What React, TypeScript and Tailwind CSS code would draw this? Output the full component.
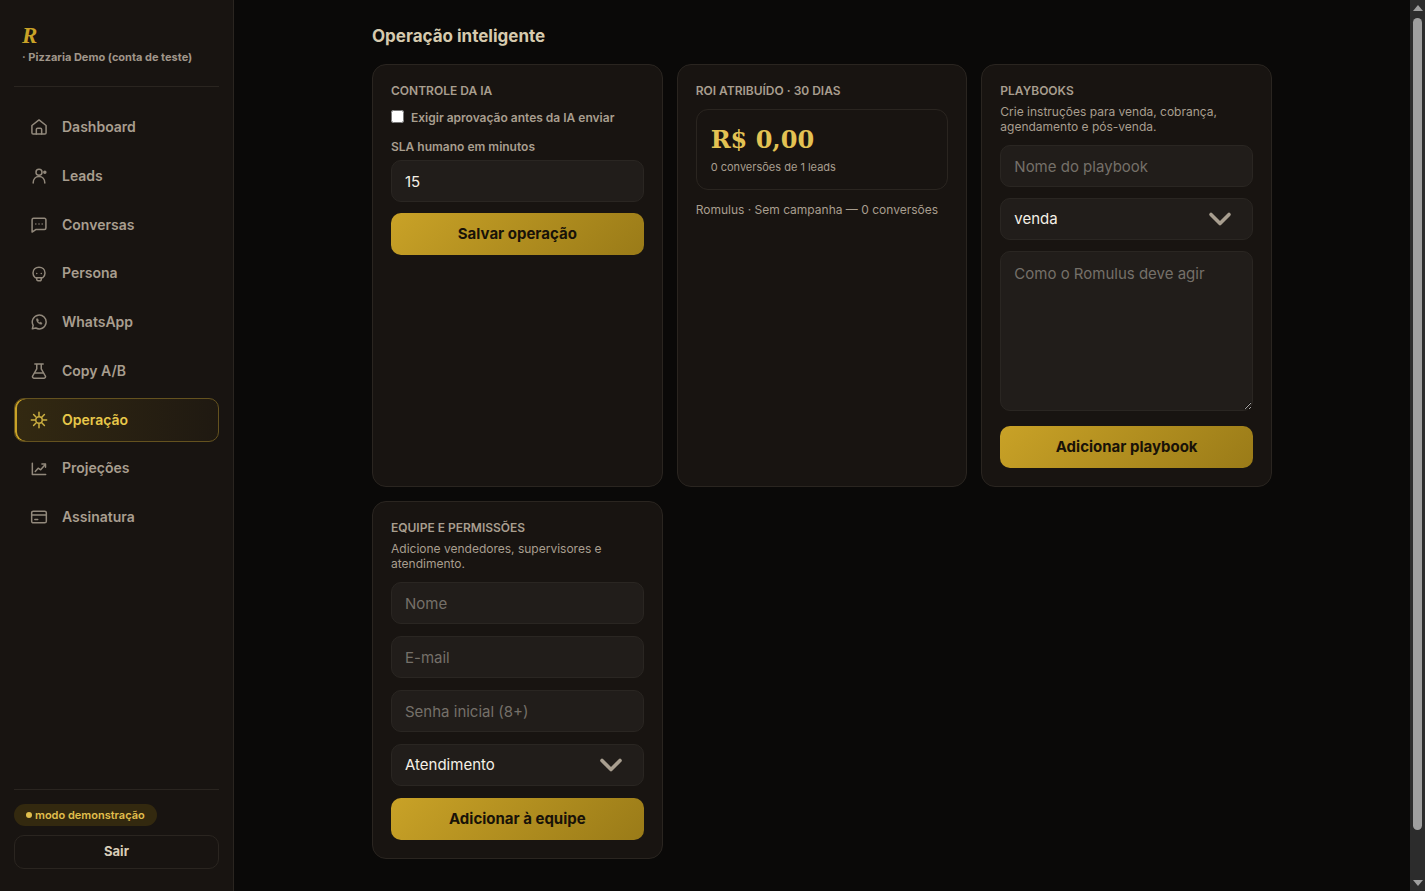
import type { ReactNode } from "react";
import { ChevronDown } from "lucide-react";

const navItems: { label: string; icon: ReactNode }[] = [
  {
    label: "Dashboard",
    icon: (
      <>
        <path d="M3.500 10.200 12 3.500l8.500 6.700V19a1.500 1.500 0 0 1-1.500 1.500H5A1.500 1.500 0 0 1 3.500 19z" />
        <path d="M8.800 20.500v-5.500a1.500 1.500 0 0 1 1.500-1.500h3.400a1.500 1.500 0 0 1 1.500 1.500v5.500" />
      </>
    ),
  },
  {
    label: "Leads",
    icon: (
      <>
        <circle cx="12" cy="7.500" r="3.600" />
        <path d="M5 20.500c0-5 3-8 7-8s7 3 7 8" />
        <circle cx="19" cy="7.500" r="1.200" fill="currentColor" />
      </>
    ),
  },
  {
    label: "Conversas",
    icon: (
      <>
        <path d="M5.500 4h13A1.800 1.800 0 0 1 20.300 5.800v9.700a1.800 1.800 0 0 1-1.800 1.800H8.500L3.700 20.500V5.800A1.800 1.800 0 0 1 5.500 4z" />
        <path d="M8.200 10.800h.01M12 10.800h.01M15.800 10.800h.01" />
      </>
    ),
  },
  {
    label: "Persona",
    icon: (
      <>
        <path d="M7.500 16.500c-1.700-1.200-2.700-3.100-2.700-5.700C4.800 6.500 7.800 3.800 12 3.800s7.200 2.700 7.200 7c0 2.600-1 4.500-2.700 5.700z" />
        <path d="M9.300 16.500v2.200a1.300 1.300 0 0 0 1.300 1.300h2.800a1.300 1.300 0 0 0 1.300-1.300v-2.200M9.300 11.500h.01M14.700 11.500h.01" />
      </>
    ),
  },
  {
    label: "WhatsApp",
    icon: (
      <>
        <path d="M4 20.200l1-4.200a8.300 8.300 0 1 1 3.200 3.200z" />
        <path d="M8.800 8.500c0 3.500 2.800 6.300 6.300 6.300l.6-1.500-2.300-1.200-1 .8c-.8-.4-1.200-.9-1.600-1.700l.8-1-1.100-2.200z" fill="currentColor" strokeWidth="0.500" />
      </>
    ),
  },
  {
    label: "Copy A/B",
    icon: (
      <>
        <path d="M7 3.500h10M9.300 3.500v6L4.400 18a1.700 1.700 0 0 0 1.500 2.600h12.200a1.700 1.700 0 0 0 1.500-2.600L14.700 9.500v-6" />
        <path d="M7 14.500h10" />
      </>
    ),
  },
  {
    label: "Operação",
    icon: (
      <>
        <circle cx="12" cy="12" r="3.900" />
        <path d="M12 2.800V7M12 17v4.200M2.800 12H7M17 12h4.200M5.500 5.500l2.900 2.900M15.600 15.600l2.900 2.900M18.500 5.500l-2.900 2.900M8.400 15.600l-2.900 2.900" />
      </>
    ),
  },
  {
    label: "Projeções",
    icon: (
      <>
        <path d="M4 5V18.500h16" />
        <path d="M7.500 15l3.500-4 3 2 5.500-6.300" />
        <path d="M15.500 6h4.300v4" />
      </>
    ),
  },
  {
    label: "Assinatura",
    icon: (
      <>
        <rect x="3.200" y="5" width="17.600" height="14" rx="2" />
        <path d="M3.200 9.500h17.600M7 15h3.500" />
      </>
    ),
  },
];

const fieldClass =
  "block w-full rounded-[10px] border border-[#2a2622] bg-[#211d1a] px-[13px] text-[15px] text-[#f5f0e6] outline-none placeholder:text-[#757069] focus:border-[#c9a227]";

function Card({ title, children }: { title: string; children: ReactNode }) {
  return (
    <section className="rounded-[14px] border border-[#2a2520] bg-[#181411] p-[18px]">
      <h3 className="text-xs leading-[15px] font-semibold text-[#a89e8f] uppercase">{title}</h3>
      {children}
    </section>
  );
}

function Hint({ children }: { children: ReactNode }) {
  return <p className="mt-[6px] text-xs leading-[15px] text-[#a89e8f]">{children}</p>;
}

function Select({ label, options }: { label: string; options: string[] }) {
  return (
    <div className="relative">
      <select aria-label={label} className={`${fieldClass} h-[42px] appearance-none`}>
        {options.map((option) => (
          <option key={option}>{option}</option>
        ))}
      </select>
      <ChevronDown
        strokeWidth={2.4}
        className="pointer-events-none absolute top-[3px] right-[15px] size-9 text-[#a89e8f]"
      />
    </div>
  );
}

function GoldButton({ children }: { children: ReactNode }) {
  return (
    <button
      type="button"
      className="h-[42px] w-full rounded-[10px] bg-linear-135 from-[#c9a227] to-[#9a7b18] text-[15px] font-bold text-[#181208]"
    >
      {children}
    </button>
  );
}

function Sidebar() {
  return (
    <aside className="flex h-full w-[234px] shrink-0 flex-col border-r border-[#2a2520] bg-[#181411] px-[14px] pt-6 pb-[22px]">

      {/* Brand */}
      <div className="border-b border-[#2a2520] px-2 pb-[22px]">
        <div className="font-['Liberation_Serif',serif] text-[23px] leading-6 font-bold text-[#c9a227] italic">R</div>
        <div className="mt-[2px] text-[11px] leading-[14px] font-bold text-[#a0968a]">
          · Pizzaria Demo (conta de teste)
        </div>
      </div>

      {/* Navigation */}
      <nav className="mt-[18px] flex flex-col gap-1">
        {navItems.map((item) => {
          const active = item.label === "Operação";
          return (
            <a
              key={item.label}
              href="#"
              className={
                active
                  ? "flex items-center gap-[13px] rounded-[10px] border border-[#64521f] bg-linear-to-r from-[#332911] to-[#1f1911] px-[14px] py-[10px] text-sm leading-relaxed font-semibold text-[#e8c84a] shadow-[inset_2px_0_0_#c9a227]"
                  : "flex items-center gap-[13px] rounded-[10px] border border-transparent px-[14px] py-[10px] text-sm leading-relaxed font-semibold text-[#a89e8f]"
              }
            >
              <svg
                viewBox="0 0 24 24"
                fill="none"
                stroke="currentColor"
                strokeWidth="1.800"
                strokeLinecap="round"
                strokeLinejoin="round"
                className="size-5 shrink-0 opacity-85"
              >
                {item.icon}
              </svg>
              {item.label}
            </a>
          );
        })}
      </nav>

      {/* Footer */}
      <div className="mt-auto border-t border-[#2a2520] pt-[14px]">
        <div className="flex h-[22px] w-fit items-center gap-[3px] rounded-full bg-[#33290f] px-3 text-[11px] font-semibold text-[#e0bf4d]">
          <span className="size-[6px] rounded-full bg-[#e0bf4d]" />
          modo demonstração
        </div>
        <button
          type="button"
          className="mt-[9px] block h-[34px] w-full rounded-[10px] border border-[#2a2520] text-[13px] font-bold text-[#d8cdb8]"
        >
          Sair
        </button>
      </div>

    </aside>
  );
}

function Scrollbar() {
  return (
    <div aria-hidden="true" className="flex h-full w-[15px] shrink-0 flex-col items-center bg-[#2c2c2c] py-[5px]">
      <svg viewBox="0 0 10 6" className="h-[6px] w-[10px] fill-[#9f9f9f]">
        <path d="M5 0l5 6H0z" />
      </svg>
      <div className="my-[7px] w-[9px] flex-1">
        <div className="h-[95%] rounded-full bg-[#9f9f9f]" />
      </div>
      <svg viewBox="0 0 10 6" className="h-[6px] w-[10px] fill-[#9f9f9f]">
        <path d="M0 0h10L5 6z" />
      </svg>
    </div>
  );
}

export default function App() {
  return (
    <div className="flex h-screen overflow-hidden bg-[#0a0908] font-[Inter,sans-serif] text-[#f5f0e6] scheme-dark">

      <Sidebar />

      {/* Main content */}
      <main className="min-w-0 flex-1 [scrollbar-width:none] overflow-y-auto px-6 pt-6 pb-[88px]">
        <div className="mx-auto max-w-[900px]">

          <h2 className="text-[17px] leading-6 font-bold text-[#d6caae]">Operação inteligente</h2>

          <div className="mt-4 grid grid-cols-3 gap-[14px]">

            <Card title="Controle da IA">
              <label className="mt-3 flex items-start gap-[7px] text-xs leading-4 font-semibold text-[#a89e8f]">
                <input type="checkbox" className="size-[13px] shrink-0 scheme-light" />
                Exigir aprovação antes da IA enviar
              </label>
              <label htmlFor="sla" className="mt-[13px] block text-xs leading-4 font-semibold text-[#a89e8f]">
                SLA humano em minutos
              </label>
              <input id="sla" defaultValue="15" className={`${fieldClass} mt-[5px] mb-[11px] h-[42px]`} />
              <GoldButton>Salvar operação</GoldButton>
            </Card>

            <Card title="ROI atribuído · 30 dias">
              <div className="mt-[11px] rounded-xl border border-[#2a2520] px-[14px] py-[14px]">
                <div className="font-['DejaVu_Serif',serif] text-2xl leading-8 font-bold text-[#e3c253]">
                  R$ 0,00
                </div>
                <div className="mt-1 text-[11px] leading-[15px] text-[#a89e8f]">0 conversões de 1 leads</div>
              </div>
              <p className="mt-3 text-xs leading-[15px] text-[#a89e8f]">Romulus · Sem campanha — 0 conversões</p>
            </Card>

            <Card title="Playbooks">
              <Hint>Crie instruções para venda, cobrança, agendamento e pós-venda.</Hint>
              <div className="mt-[11px] flex flex-col gap-[11px]">
                <input aria-label="Nome do playbook" placeholder="Nome do playbook" className={`${fieldClass} h-[42px]`} />
                <Select label="Tipo de playbook" options={["venda", "cobrança", "agendamento", "pós-venda"]} />
                <textarea
                  aria-label="Instruções"
                  placeholder="Como o Romulus deve agir"
                  className={`${fieldClass} mb-1 h-[160px] resize-y py-3 leading-5`}
                />
                <GoldButton>Adicionar playbook</GoldButton>
              </div>
            </Card>

            <Card title="Equipe e permissões">
              <Hint>Adicione vendedores, supervisores e atendimento.</Hint>
              <div className="mt-[11px] flex flex-col gap-3">
                <input aria-label="Nome" placeholder="Nome" className={`${fieldClass} h-[42px]`} />
                <input aria-label="E-mail" type="email" placeholder="E-mail" className={`${fieldClass} h-[42px]`} />
                <input
                  aria-label="Senha inicial"
                  type="password"
                  placeholder="Senha inicial (8+)"
                  className={`${fieldClass} h-[42px]`}
                />
                <Select label="Função" options={["Atendimento", "Vendedor", "Supervisor"]} />
                <GoldButton>Adicionar à equipe</GoldButton>
              </div>
            </Card>

          </div>
        </div>
      </main>

      <Scrollbar />
    </div>
  );
}
